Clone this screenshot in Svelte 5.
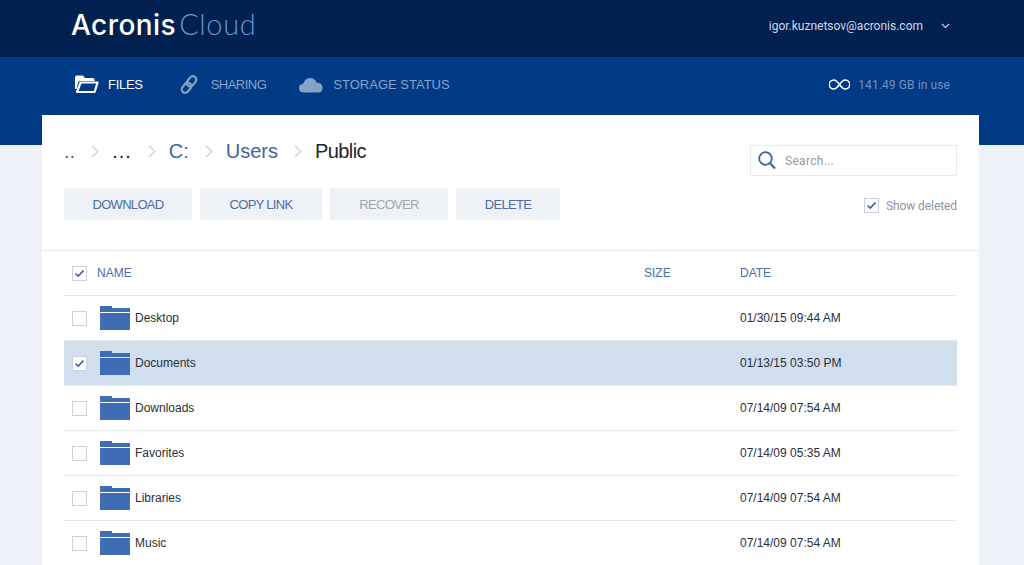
<script>
  const rows = [
    { name: 'Desktop', date: '01/30/15 09:44 AM', on: false },
    { name: 'Documents', date: '01/13/15 03:50 PM', on: true },
    { name: 'Downloads', date: '07/14/09 07:54 AM', on: false },
    { name: 'Favorites', date: '07/14/09 05:35 AM', on: false },
    { name: 'Libraries', date: '07/14/09 07:54 AM', on: false },
    { name: 'Music', date: '07/14/09 07:54 AM', on: false }
  ];
</script>

{#snippet check(on)}
  <span class="check">
    {#if on}
      <svg width="11" height="9" viewBox="0 0 11 9"><path d="M1.5 4.5 L4.2 7 L9.5 1.5" fill="none" stroke="#3f5f9c" stroke-width="1.7"/></svg>
    {/if}
  </span>
{/snippet}

{#snippet sep()}
  <svg class="sep" width="8" height="13" viewBox="0 0 8 13"><path d="M1 1 L7 6.5 L1 12" fill="none" stroke="#c2cde0" stroke-width="1.1"/></svg>
{/snippet}

<div class="page">
  <header class="top">
    <div class="logo"><span class="a">Acronis</span><span class="c">Cloud</span></div>
    <div class="user">
      <span>igor.kuznetsov@acronis.com</span>
      <svg width="9" height="6" viewBox="0 0 9 6"><path d="M1 1 L4.5 4.5 L8 1" fill="none" stroke="#c3cfe2" stroke-width="1.2"/></svg>
    </div>
  </header>

  <nav class="nav">
    <div class="tab active">
      <svg width="24" height="19" viewBox="0 0 24 19"><path d="M0 2.5 Q0 0.5 2 0.5 H8 L10 3 H18 Q19.5 3 19.5 5 V6 H5 Q3.6 6 3 8 L1.4 14 H0 Z" fill="#fff"/><path d="M5.6 7.5 H22.6 L19.6 17 H2 Z" fill="none" stroke="#fff" stroke-width="2.2" stroke-linejoin="round"/></svg>
      <span>FILES</span>
    </div>
    <div class="tab share">
      <svg width="18" height="19" viewBox="0 0 18 19" fill="none" stroke="#87a2c8" stroke-width="2.2"><rect x="8" y="0.8" width="7" height="11" rx="3.5" transform="rotate(38 11.5 6.3)"/><rect x="3" y="7.2" width="7" height="11" rx="3.5" transform="rotate(38 6.5 12.7)"/></svg>
      <span>SHARING</span>
    </div>
    <div class="tab">
      <svg width="24" height="16" viewBox="0 0 24 16"><path d="M5 15.5 Q0 15.5 0 11 Q0 7.2 4.2 6.8 Q5.5 2 10 1 Q15.5 0.4 17.5 5.6 Q23.5 6 23.5 11 Q23.5 15.5 19 15.5 Z" fill="#87a2c8"/></svg>
      <span>STORAGE STATUS</span>
    </div>
    <div class="usage">
      <svg width="21" height="11" viewBox="0 0 21 11"><path d="M10.5 5.5 C8 2 6.5 1 4.8 1 A4.5 4.5 0 0 0 4.8 10 C6.5 10 8 9 10.5 5.5 C13 2 14.5 1 16.2 1 A4.5 4.5 0 0 1 16.2 10 C14.5 10 13 9 10.5 5.5 Z" fill="none" stroke="#fff" stroke-width="1.5"/></svg>
      <span>141.49 GB in use</span>
    </div>
  </nav>

  <main class="card">
    <div class="tools">
      <div class="left">
        <div class="crumbs">
          <span class="link">..</span>
          {@render sep()}
          <span class="dark dots">...</span>
          {@render sep()}
          <span class="link">C:</span>
          {@render sep()}
          <span class="link">Users</span>
          {@render sep()}
          <span class="dark current">Public</span>
        </div>
        <div class="buttons">
          <button class="b1">DOWNLOAD</button>
          <button class="b2">COPY LINK</button>
          <button class="b3 off">RECOVER</button>
          <button class="b4">DELETE</button>
        </div>
      </div>
      <div class="right">
        <div class="search">
          <svg width="18" height="19" viewBox="0 0 18 19" fill="none" stroke="#3f6198" stroke-width="1.8"><circle cx="7.5" cy="7.5" r="6.3"/><path d="M12 12 L17 17.5" stroke-width="2"/></svg>
          <span>Search...</span>
        </div>
        <div class="deleted">{@render check(true)}<span>Show deleted</span></div>
      </div>
    </div>

    <div class="list">
      <div class="row head">
        <div class="c-check">{@render check(true)}</div>
        <div class="c-name">NAME</div>
        <div class="c-size">SIZE</div>
        <div class="c-date">DATE</div>
      </div>
      {#each rows as r}
        <div class="row item" class:on={r.on}>
          <div class="c-check">{@render check(r.on)}</div>
          <div class="c-name">
            <svg width="30" height="24" viewBox="0 0 30 24"><path d="M0 0 H12 V2 H30 V6 H0 Z M0 7 H30 V24 H0 Z" fill="#3f6db5"/></svg>
            <span>{r.name}</span>
          </div>
          <div class="c-size"></div>
          <div class="c-date">{r.date}</div>
        </div>
      {/each}
    </div>
  </main>
</div>

<style>
  :global(body) { margin: 0; background: #eef1f7; overflow: hidden; }
  .page { height: 565px; overflow: hidden; font-family: "Liberation Sans", Arial, sans-serif; }

  .top { height: 57px; background: #00214f; display: flex; align-items: center; justify-content: space-between; padding: 0 74px 0 71px; box-sizing: border-box; }
  .logo { display: flex; align-items: baseline; gap: 3px; font-size: 28px; line-height: 48px; margin-bottom: 8px; }
  .logo .a { color: #fff; font-family: Inter, sans-serif; font-weight: 500; letter-spacing: 0.45px; }
  .logo .c { color: #5e96d8; font-family: Lato, sans-serif; font-weight: 300; font-size: 29px; letter-spacing: 0.6px; }
  .user { display: flex; align-items: center; gap: 18px; color: #cfd8e6; font: 12px Roboto, sans-serif; margin-bottom: 5px; }

  .nav { height: 88px; background: #003a85; display: flex; align-items: flex-start; padding: 17px 74px 0 75px; box-sizing: border-box; color: #87a2c8; font-size: 13px; }
  .tab { display: flex; align-items: center; gap: 10px; height: 21px; margin-right: 33px; }
  .tab.share { gap: 13px; letter-spacing: -0.5px; }
  .tab.active { color: #fff; gap: 9px; margin-right: 37px; letter-spacing: -0.3px; }
  .tab span { margin-top: -1px; }
  .usage { margin-left: auto; display: flex; align-items: center; gap: 8px; height: 21px; font: 12px Roboto, sans-serif; letter-spacing: 0.1px; color: #6f92c4; }

  .card { margin: -30px 45px 0 42px; height: 450px; background: #fff; padding: 0 22px; box-sizing: border-box; }
  .tools { height: 136px; margin: 0 -22px; padding: 0 22px; box-sizing: border-box; border-bottom: 1px solid #e8e9ec; display: flex; justify-content: space-between; }
  .crumbs { display: flex; align-items: baseline; height: 73px; padding-top: 25px; box-sizing: border-box; font-size: 20px; }
  .sep { margin: 5px 13px 0 16px; align-self: flex-start; }
  .dots { letter-spacing: 1px; }
  .current { letter-spacing: -0.6px; }
  .link { color: #3f659f; }
  .dark { color: #1d2430; }
  .buttons { display: flex; gap: 8px; }
  button { height: 32px; padding: 0; border: 0; background: #eef2f7; color: #4a6ea6; font: 13px "Liberation Sans", sans-serif; letter-spacing: -0.7px; }
  .b1 { width: 128px; }
  .b2 { width: 122px; }
  .b3 { width: 118px; }
  .b4 { width: 104px; }
  .off { color: #a2a7ae; }
  .right { display: flex; flex-direction: column; align-items: flex-end; padding-top: 30px; }
  .search { width: 207px; height: 31px; box-sizing: border-box; border: 1px solid #e6ebf2; display: flex; align-items: center; gap: 9px; padding-left: 7px; color: #939aa8; font: 12px Roboto, sans-serif; letter-spacing: 0.3px; }
  .deleted { display: flex; align-items: center; gap: 7px; margin-top: 22px; color: #8e95a3; font: 12px Roboto, sans-serif; letter-spacing: -0.08px; }
  .check { width: 13px; height: 13px; border: 1px solid #ccd3df; background: #fff; display: inline-flex; align-items: center; justify-content: center; }

  .row { display: flex; align-items: center; height: 45px; box-sizing: border-box; border-bottom: 1px solid #e8e9ec; font-size: 12px; }
  .head { color: #4a6ea6; }
  .item { color: #2a3038; }
  .item.on { background: #d1deed; }
  .c-check { width: 33px; padding-left: 8px; box-sizing: border-box; display: flex; }
  .c-name { width: 547px; display: flex; align-items: center; gap: 5px; }
  .item .c-name { margin-left: 3px; width: 544px; }
  .c-size { width: 96px; }
  .c-date { flex: 1; }
</style>
